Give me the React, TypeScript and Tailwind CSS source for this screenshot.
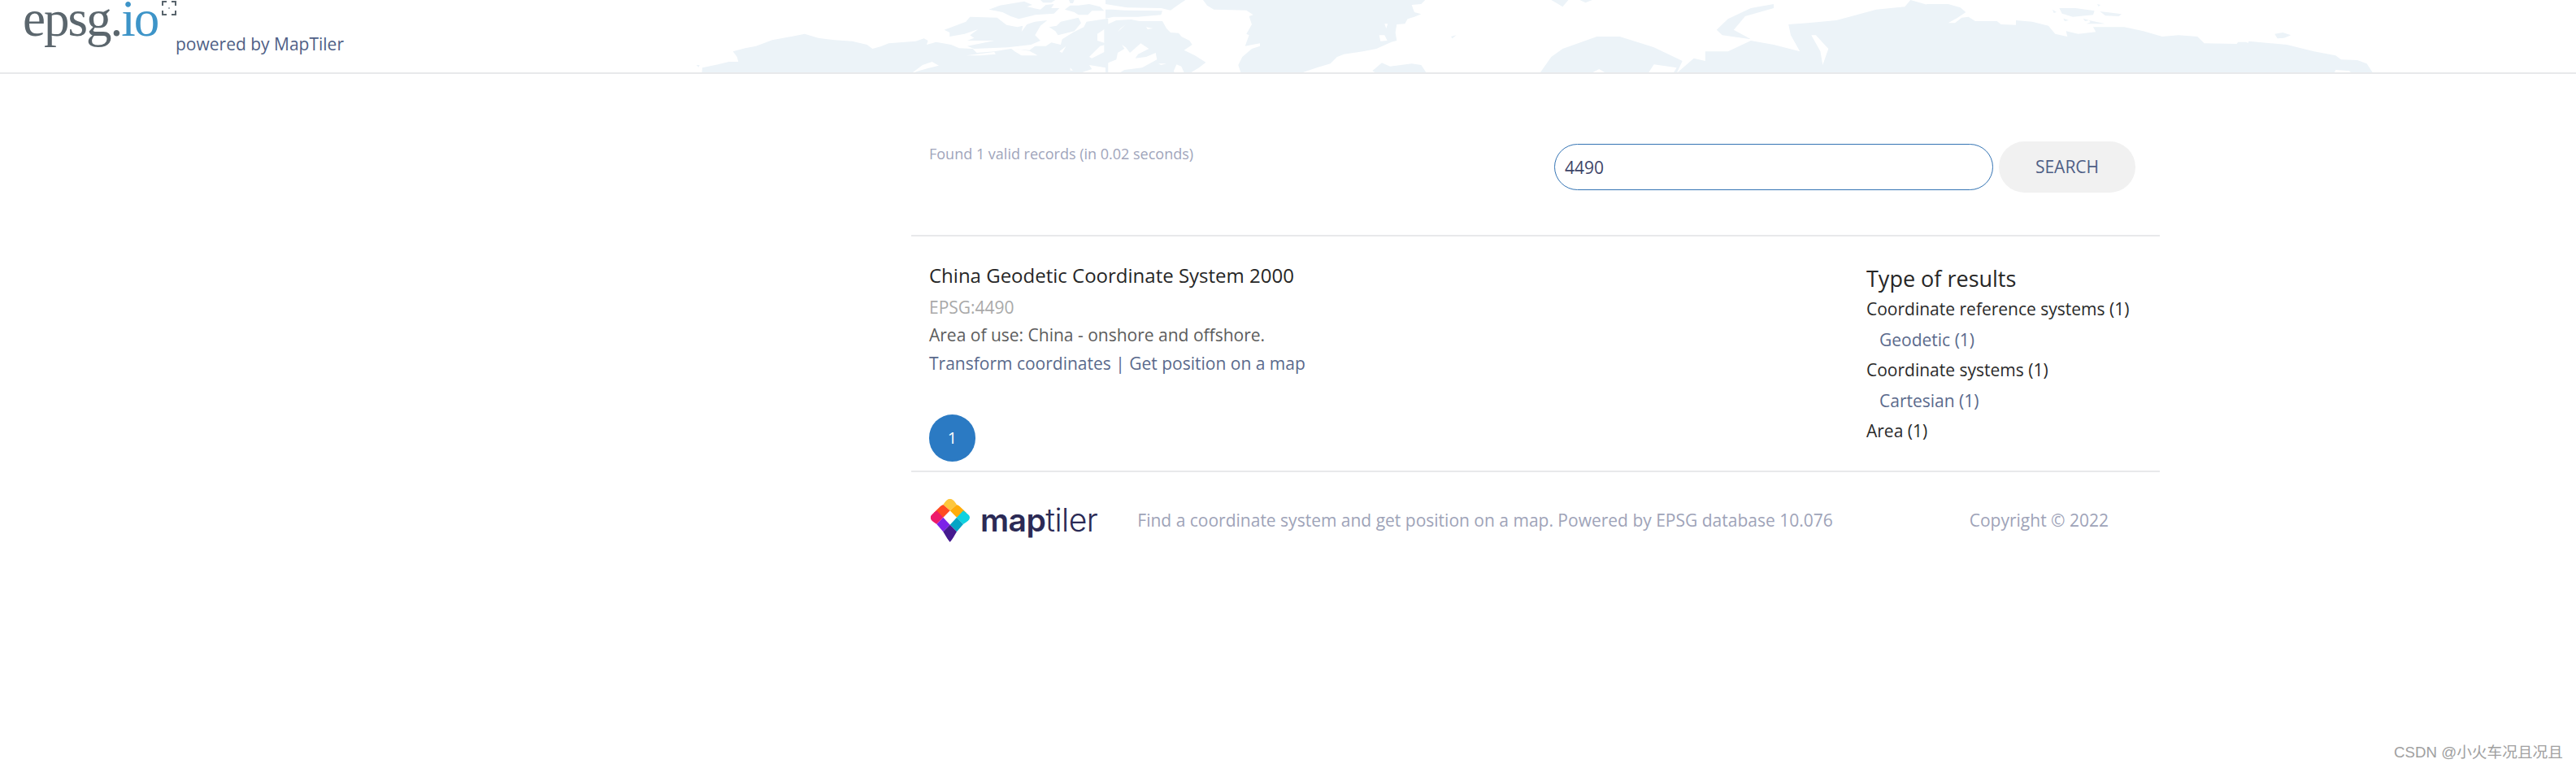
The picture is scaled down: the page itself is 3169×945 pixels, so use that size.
const sans = "font-['Open_Sans',sans-serif]";

function WorldMap() {
  return (
    <svg
      className="absolute left-0 top-0 h-[89px] w-[3169px]"
      viewBox="0 0 3169 89"
      fill="#ecf3f8"
      aria-hidden="true"
    >
      {/* north america west */}
      <g transform="translate(840,0) scale(0.3333)">
        <path d="M70 270L72 250L130 238L170 228L205 228L200 210L185 190L230 178L270 170L330 148L400 135L450 125L500 140L560 148L625 152L680 165L700 180L730 172L760 160L860 152L890 142L905 150L900 165L935 155L990 165L1020 178L1070 180L1085 195L1150 190L1210 180L1280 185L1300 170L1340 170L1360 157L1395 165L1400 145L1440 120L1480 100L1490 80L1570 68L1570 270Z" />
        <path d="M965 110L1045 80L1060 62L1160 65L1195 92L1235 100L1255 95L1250 118L1270 90L1300 80L1345 75L1320 95L1300 130L1320 150L1285 165L1200 175L1075 180L1050 170L1150 150L1050 150L1075 140L1060 130L1090 108L1040 125L985 135L985 120Z" />
        <path d="M1130 35L1170 20L1260 5L1290 18L1270 25L1320 35L1340 18L1370 15L1360 30L1390 30L1370 50L1300 55L1240 70L1210 60L1180 45Z" />
        <path d="M1320 0L1375 0L1360 10L1330 10Z" />
        <path d="M1425 0L1445 0L1440 12L1430 12Z" />
        <path d="M1410 35L1430 20L1460 20L1500 15L1540 25L1555 40L1510 40L1495 55L1460 55L1445 45Z" />
        <path d="M1352 100L1380 95L1395 80L1460 65L1470 85L1445 115L1385 130L1375 115Z" />
        <path d="M50 240L62 240L58 248Z" />
        <path fill="#fff" d="M1045 205L1150 192L1155 200L1100 205ZM885 240L920 228L945 242L905 252L870 262L845 270ZM1210 178L1280 188L1310 205L1250 205L1225 190ZM1390 190L1415 170L1400 195ZM1500 210L1540 170L1560 165L1560 190L1510 215ZM1530 125L1560 105L1560 160L1530 150ZM1430 250L1440 260L1430 260ZM1500 240L1560 250L1560 270L1465 270L1510 255Z" />
      </g>
      {/* arctic islands, baffin, quebec */}
      <g transform="translate(1360,0) scale(0.3333)">
        <path d="M0 0L295 0L265 20L240 38L205 30L80 28L60 25L0 15Z" />
        <path d="M0 35L25 35L70 38L210 40L205 55L120 62L30 62L0 68Z" />
        <path d="M-5 95L40 75L95 72L125 78L210 78L225 105L240 120L270 122L280 135L310 150L320 165L290 185L330 205L370 230L345 250L315 268L290 268L280 245L262 238L252 262L255 270L50 270L70 258L135 250L190 220L185 195L150 210L110 215L120 200L160 180L130 160L90 195L75 175L60 165L70 180L45 195L40 220L-5 238Z" />
        <path fill="#fff" d="M45 118L75 90L55 105ZM150 100L175 105L155 108ZM195 235L225 235L205 240Z" />
        {/* greenland */}
        <path d="M360 0L1180 0L1165 15L1130 18L1140 45L1165 52L1140 62L1115 70L1105 88L1075 90L1070 120L1075 150L1055 155L1000 180L950 190L880 200L855 210L830 235L780 250L720 270L500 270L490 240L505 210L540 180L570 170L570 160L515 170L530 130L520 125L540 90L530 60L545 55L520 38L400 35L375 20Z" />
        <path fill="#fff" d="M1010 130L1030 130L1040 150L1015 152ZM1030 88L1042 88L1036 105Z" />
        <path d="M552 125L575 135L552 140Z" />
        <path d="M985 262L1020 232L1050 245L1130 235L1165 240L1185 270L1000 270Z" />
        <path d="M1275 135L1295 130L1280 142Z" />
      </g>
      {/* scandinavia and western russia */}
      <g transform="translate(800,0) scale(1.403,0.3333)">
        <path d="M790 0L805 0L800 25Z" />
        <path d="M815 0L826 0L820 10Z" />
        <path d="M780 270L790 210L800 180L830 135L850 135L880 175L905 225L900 270Z" />
        <path d="M900 270L915 215L925 225L925 190L945 190L965 150L985 165L1008 190L1000 130L998 90L1015 85L1040 75L1075 35L1100 25L1105 0L1120 18L1128 15L1128 270Z" />
        <path d="M945 70L965 30L985 15L985 30L960 60L950 110L965 145L940 130L935 110Z" />
        <path fill="#fff" d="M1028 240L1033 180L1022 130L1018 130L1026 190ZM825 270L832 255L838 270ZM875 270L880 238L900 250L897 270Z" />
      </g>
      {/* siberia */}
      <g transform="translate(2380,0) scale(0.3333)">
        <path d="M-30 15L50 15L95 28L115 45L85 65L50 85L75 85L100 65L125 62L150 78L230 78L245 90L300 92L300 75L360 80L420 95L445 125L490 135L485 115L530 125L595 118L585 100L700 100L770 115L840 135L900 130L970 135L995 160L1115 162L1120 155L1150 155L1190 180L1150 170L1160 152L1300 165L1400 190L1480 205L1500 220L1560 222L1595 235L1618 270L-30 270Z" />
        <path d="M460 30L520 30L590 40L585 55L510 62L470 50Z" />
        <path d="M610 42L690 52L680 60L630 58Z" />
        <path d="M435 35L450 45L440 48Z" />
        <path d="M475 68L495 75L480 78Z" />
        <path d="M548 68L570 75L555 78Z" />
        <path d="M570 75L630 88L560 88L575 82Z" />
        <path d="M600 15L612 18L605 24Z" />
        <path d="M1255 125L1285 120L1315 130L1290 140L1265 142Z" />
        <path fill="#fff" d="M1475 270L1480 258L1530 262L1540 270Z" />
      </g>
    </svg>
  );
}

function ExtentIcon() {
  return (
    <svg className="absolute left-[199px] top-[1px] h-[18px] w-[18px]" viewBox="0 0 18 18" fill="none" stroke="#59646c" strokeWidth="2">
      <path d="M1 6V1H6M12 1H17V6M17 12V17H12M6 17H1V12" />
      <circle cx="9" cy="9" r="1" fill="#8a949b" stroke="none" />
    </svg>
  );
}

function MapTilerMark() {
  return (
    <svg className="h-[54px] w-[50px]" viewBox="73 124 146 162">
      <defs>
        <clipPath id="mark">
          <path d="M132 132Q145 120 158 132L212 184Q224 195 212 208L145 286L79 208Q67 195 79 184Z" />
        </clipPath>
      </defs>
      <g clipPath="url(#mark)">
        <path fill="#fdc73c" d="M145 110L170 148L145 170L120 148Z" />
        <path fill="#ff4a21" d="M120 148L145 170L120 195L70 170Z" />
        <path fill="#ffad0a" d="M170 148L220 170L170 195L145 170Z" />
        <path fill="#ed1a6a" d="M96 170L120 195L96 220L60 195Z" />
        <path fill="#0fd2e0" d="M194 170L230 195L194 220L170 195Z" />
        <path fill="#7c22e8" d="M120 195L145 222L120 248L96 220Z" />
        <path fill="#04a4c5" d="M170 195L194 220L170 248L145 222Z" />
        <path fill="#451a8f" d="M145 222L170 248L145 290L120 248Z" />
      </g>
    </svg>
  );
}

function SideLink({ children, sub }: { children: string; sub?: boolean }) {
  return (
    <div className={sub ? 'pl-[16px] text-[#5a6a8c] h-[37.5px] leading-[37.5px]' : 'text-[#2a2a2a] h-[37.5px] leading-[37.5px]'}>
      {children}
    </div>
  );
}

export default function App() {
  return (
    <div className={`relative h-[945px] overflow-hidden bg-white ${sans}`}>
      <header className="relative h-[91px] border-b-2 border-[#e8e9eb]">
        <WorldMap />
        <div className="absolute left-[28px] top-0 font-['Liberation_Serif',serif] text-[63px] leading-[47px] tracking-[-2px] text-[#5b666d]">
          epsg.<span className="text-[#3d94c8]">io</span>
        </div>
        <ExtentIcon />
        <div className="absolute left-[216px] top-[40px] text-[21px] leading-[28px] text-[#4f5f86]">powered by MapTiler</div>
      </header>

      <main className="ml-[1121px] w-[1536px]">
        <section className="flex h-[200px] justify-between border-b-2 border-[#e8e9eb] pl-[22px] pr-[30px]">
          <p className="pt-[86px] text-[18px] leading-[24px] text-[#a0a5bb]">Found 1 valid records (in 0.02 seconds)</p>
          <div className="flex items-start gap-[7px] pt-[83px]">
            <input
              readOnly
              value="4490"
              className="mt-[3px] h-[57px] w-[540px] rounded-full border border-[#3474b4] bg-white px-[12px] text-[21px] text-[#3e4568] outline-none"
            />
            <button className="h-[63px] w-[168px] rounded-full bg-[#f1f1f1] text-[21px] text-[#4f5f86]">SEARCH</button>
          </div>
        </section>

        <section className="flex h-[290px] border-b-2 border-[#e8e9eb] pl-[22px]">
          <div className="w-[1153px]">
            <h2 className="pt-[31px] text-[24px] leading-[34px] text-[#262626]">China Geodetic Coordinate System 2000</h2>
            <div className="mt-[6px] text-[21px] leading-[32px] text-[#a9a9a9]">EPSG:4490</div>
            <div className="mt-[2px] text-[21px] leading-[32px] text-[#5c5c5c]">Area of use: China - onshore and offshore.</div>
            <div className="mt-[3px] text-[21px] leading-[32px] text-[#5a6a8c]">Transform coordinates | Get position on a map</div>
            <div className="mt-[47px] flex h-[58px] w-[57px] items-center justify-center rounded-full bg-[#2b7ac3] text-[20px] text-white">1</div>
          </div>
          <aside className="text-[21px]">
            <h3 className="pt-[32px] text-[27px] leading-[39px] text-[#262626]">Type of results</h3>
            <SideLink>Coordinate reference systems (1)</SideLink>
            <SideLink sub>Geodetic (1)</SideLink>
            <SideLink>Coordinate systems (1)</SideLink>
            <SideLink sub>Cartesian (1)</SideLink>
            <SideLink>Area (1)</SideLink>
          </aside>
        </section>

        <footer className="flex items-center pl-[23px] pt-[32px] text-[21px] text-[#9ea3b8]">
          <MapTilerMark />
          <div className="ml-[12px] font-['Inter',sans-serif] text-[39px] leading-[50px] tracking-[-0.5px] text-[#2b2a55]">
            <span className="font-semibold">map</span>
            <span className="font-light">tiler</span>
          </div>
          <span className="ml-[49px] leading-[54px]">Find a coordinate system and get position on a map. Powered by EPSG database 10.076</span>
          <span className="ml-[168px] leading-[54px]">Copyright © 2022</span>
        </footer>
      </main>

      <div className="absolute bottom-[9px] right-[16px] font-['Liberation_Sans','Noto_Sans_CJK_SC',sans-serif] text-[18.7px] leading-[20px] text-[#a0a0a0]">
        CSDN @小火车况且况且
      </div>
    </div>
  );
}
